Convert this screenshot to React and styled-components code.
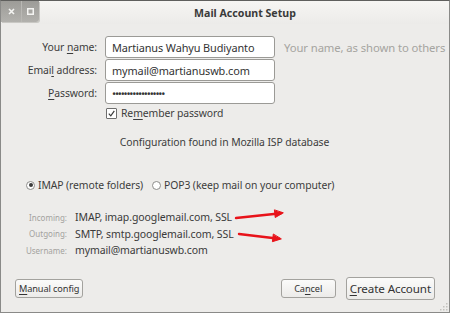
import React from 'react';
import styled, { createGlobalStyle } from 'styled-components';

const Global = createGlobalStyle`
  html, body { margin: 0; padding: 0; background: #edecea; }
  body { font-family: "Noto Sans", "DejaVu Sans", sans-serif; }
`;

const Window = styled.div`
  width: 450px;
  height: 313px;
  box-sizing: border-box;
  border: 1px solid #8a8a88;
  border-top-color: #5f5f5d;
  background: #edecea;
  display: flex;
  flex-direction: column;
  position: relative;
  overflow: hidden;
  color: #3c3c3c;
  font-size: 10.4px;
  letter-spacing: -0.1px;
`;

const TitleBar = styled.div`
  height: 23px;
  flex: none;
  display: flex;
  align-items: center;
  background: linear-gradient(#f6f5f3, #ecebe9);
  position: relative;
`;

const Controls = styled.div`
  display: flex;
  height: 21px;
  align-self: flex-start;
  background: linear-gradient(#9d9c98, #b2b1ad);
  border-bottom-right-radius: 3px;
  box-shadow: 1px 1px 0 #c9c8c4;
`;

const CtrlBtn = styled.div`
  width: ${p => p.w}px;
  display: flex;
  align-items: center;
  justify-content: center;
  border-right: ${p => (p.sep ? '1px solid #b9b8b4' : 'none')};
`;

const Title = styled.div`
  position: absolute;
  left: 40px;
  right: 0;
  text-align: center;
  font-weight: bold;
  font-size: 10.6px;
  letter-spacing: 0;
  color: #3a3a3a;
`;

const Body = styled.div`
  flex: 1;
  display: flex;
  flex-direction: column;
  padding: 12px 0 0 0;
`;

const Form = styled.div`
  display: grid;
  grid-template-columns: 96px 170px auto;
  grid-auto-rows: 22px;
  column-gap: 8px;
  row-gap: 1px;
  align-items: center;
`;

const Label = styled.label`
  text-align: right;
  white-space: nowrap;
  color: #3c3c3c;
  u { text-decoration: underline; text-underline-offset: 2px; }
`;

const Input = styled.div`
  height: 22px;
  box-sizing: border-box;
  background: #fff;
  border: 1px solid #9b9a96;
  border-radius: 3px;
  padding: 0 6px;
  display: flex;
  align-items: center;
  font-size: 10.9px;
  color: #333;
  letter-spacing: ${p => (p.dots ? '-1.2px' : '-0.1px')};
`;

const Hint = styled.span`
  color: #a5a4a0;
  white-space: nowrap;
  font-size: 11.3px;
  padding-left: 1px;
`;

const CheckRow = styled.div`
  display: flex;
  align-items: center;
  gap: 4px;
  margin: 1px 0 0 105px;
  height: 16px;
  u { text-decoration: underline; text-underline-offset: 2px; }
`;

const Box = styled.span`
  width: 9px;
  height: 9px;
  border: 1px solid #6e6e6e;
  border-radius: 1px;
  display: inline-flex;
  align-items: center;
  justify-content: center;
  background: #fff;
`;

const Status = styled.div`
  text-align: center;
  margin-top: 14px;
  padding-right: 1px;
`;

const Radios = styled.div`
  display: flex;
  align-items: center;
  margin: 29px 0 0 25px;
  gap: 9px;
`;

const Radio = styled.span`
  display: inline-flex;
  align-items: center;
  gap: 3px;
`;

const Dot = styled.span`
  width: 9px;
  height: 9px;
  border-radius: 50%;
  box-sizing: border-box;
  border: 1px solid #8d8d8b;
  background: #fff;
  display: inline-flex;
  align-items: center;
  justify-content: center;
  &::after {
    content: '';
    width: 4px;
    height: 4px;
    border-radius: 50%;
    background: ${p => (p.on ? '#3c3c3c' : 'transparent')};
  }
`;

const Info = styled.div`
  display: grid;
  grid-template-columns: 66px auto;
  grid-auto-rows: 16.5px;
  column-gap: 8px;
  align-items: center;
  margin-top: 17px;
  position: relative;
`;

const InfoLabel = styled.span`
  text-align: right;
  font-size: 8px;
  color: #a3a29e;
  letter-spacing: 0;
`;

const InfoValue = styled.span`
  font-size: 10.5px;
  color: #3a3a3a;
`;

const Arrows = styled.svg`
  position: absolute;
  left: 0;
  top: 0;
  overflow: visible;
  pointer-events: none;
`;

const Footer = styled.div`
  margin-top: auto;
  display: flex;
  align-items: center;
  padding: 0 14px 12px 14px;
`;

const Button = styled.div`
  height: ${p => (p.big ? 23 : 19)}px;
  box-sizing: border-box;
  padding: 0 3px;
  min-width: ${p => p.min || 0}px;
  display: flex;
  align-items: center;
  justify-content: center;
  border: 1px solid #a3a29e;
  border-radius: 3px;
  background: linear-gradient(#fbfbfa, #ecebe9);
  font-size: ${p => (p.big ? 11.6 : 9.2)}px;
  color: #333;
  margin-left: ${p => p.ml || 0}px;
  u { text-decoration: underline; text-underline-offset: 2px; }
`;

const Grip = styled.svg`
  position: absolute;
  right: 1px;
  bottom: 1px;
`;

function Arrow({ x1, y1, x2, y2 }) {
  const a = Math.atan2(y2 - y1, x2 - x1);
  const l = 9;
  const w = 0.42;
  const p1 = [x2 - l * Math.cos(a - w), y2 - l * Math.sin(a - w)];
  const p2 = [x2 - l * Math.cos(a + w), y2 - l * Math.sin(a + w)];
  return (
    <g stroke="#e8131a" strokeWidth="2.4" strokeLinecap="round" fill="none">
      <line x1={x1} y1={y1} x2={x2 - 2 * Math.cos(a)} y2={y2 - 2 * Math.sin(a)} />
      <polygon points={`${x2},${y2} ${p1[0]},${p1[1]} ${p2[0]},${p2[1]}`} fill="#e8131a" strokeWidth="1" />
    </g>
  );
}

export default function App() {
  return (
    <>
      <Global />
      <Window>
        <TitleBar>
          <Controls>
            <CtrlBtn w={20} sep>
              <svg width="7" height="7" viewBox="0 0 7 7">
                <path d="M1 1L6 6M6 1L1 6" stroke="#f4f4f2" strokeWidth="1.6" />
              </svg>
            </CtrlBtn>
            <CtrlBtn w={17}>
              <svg width="7" height="7" viewBox="0 0 7 7">
                <rect x="0.75" y="0.75" width="5.5" height="5.5" stroke="#f4f4f2" strokeWidth="1.5" fill="none" />
              </svg>
            </CtrlBtn>
          </Controls>
          <Title>Mail Account Setup</Title>
        </TitleBar>
        <Body>
          <Form>
            <Label>Your <u>n</u>ame:</Label>
            <Input>Martianus Wahyu Budiyanto</Input>
            <Hint>Your name, as shown to others</Hint>
            <Label>Emai<u>l</u> address:</Label>
            <Input>mymail@martianuswb.com</Input>
            <span />
            <Label><u>P</u>assword:</Label>
            <Input dots>{'•'.repeat(18)}</Input>
            <span />
          </Form>
          <CheckRow>
            <Box>
              <svg width="7" height="7" viewBox="0 0 7 7">
                <path d="M0.8 3.6L2.8 5.8L6.3 0.8" stroke="#3a3a3a" strokeWidth="1.2" fill="none" />
              </svg>
            </Box>
            <span>Re<u>m</u>ember password</span>
          </CheckRow>
          <Status>Configuration found in Mozilla ISP database</Status>
          <Radios>
            <Radio><Dot on />IMAP (remote folders)</Radio>
            <Radio><Dot />POP3 (keep mail on your computer)</Radio>
          </Radios>
          <Info>
            <InfoLabel>Incoming:</InfoLabel>
            <InfoValue>IMAP, imap.googlemail.com, SSL</InfoValue>
            <InfoLabel>Outgoing:</InfoLabel>
            <InfoValue>SMTP, smtp.googlemail.com, SSL</InfoValue>
            <InfoLabel>Username:</InfoLabel>
            <InfoValue>mymail@martianuswb.com</InfoValue>
            <Arrows width="1" height="1">
              <Arrow x1={235} y1={9} x2={282} y2={4} />
              <Arrow x1={238} y1={25} x2={280} y2={30} />
            </Arrows>
          </Info>
          <Footer>
            <Button><u>M</u>anual config</Button>
            <Button min={55} style={{ marginLeft: 'auto' }}>Ca<u>n</u>cel</Button>
            <Button big ml={10}><u>C</u>reate Account</Button>
          </Footer>
        </Body>
        <Grip width="8" height="8" viewBox="0 0 8 8">
          {[[6, 0], [6, 3], [3, 3], [6, 6], [3, 6], [0, 6]].map(([x, y]) => (
            <rect key={`${x}-${y}`} x={x} y={y} width="1.5" height="1.5" fill="#c3c2be" />
          ))}
        </Grip>
      </Window>
    </>
  );
}
